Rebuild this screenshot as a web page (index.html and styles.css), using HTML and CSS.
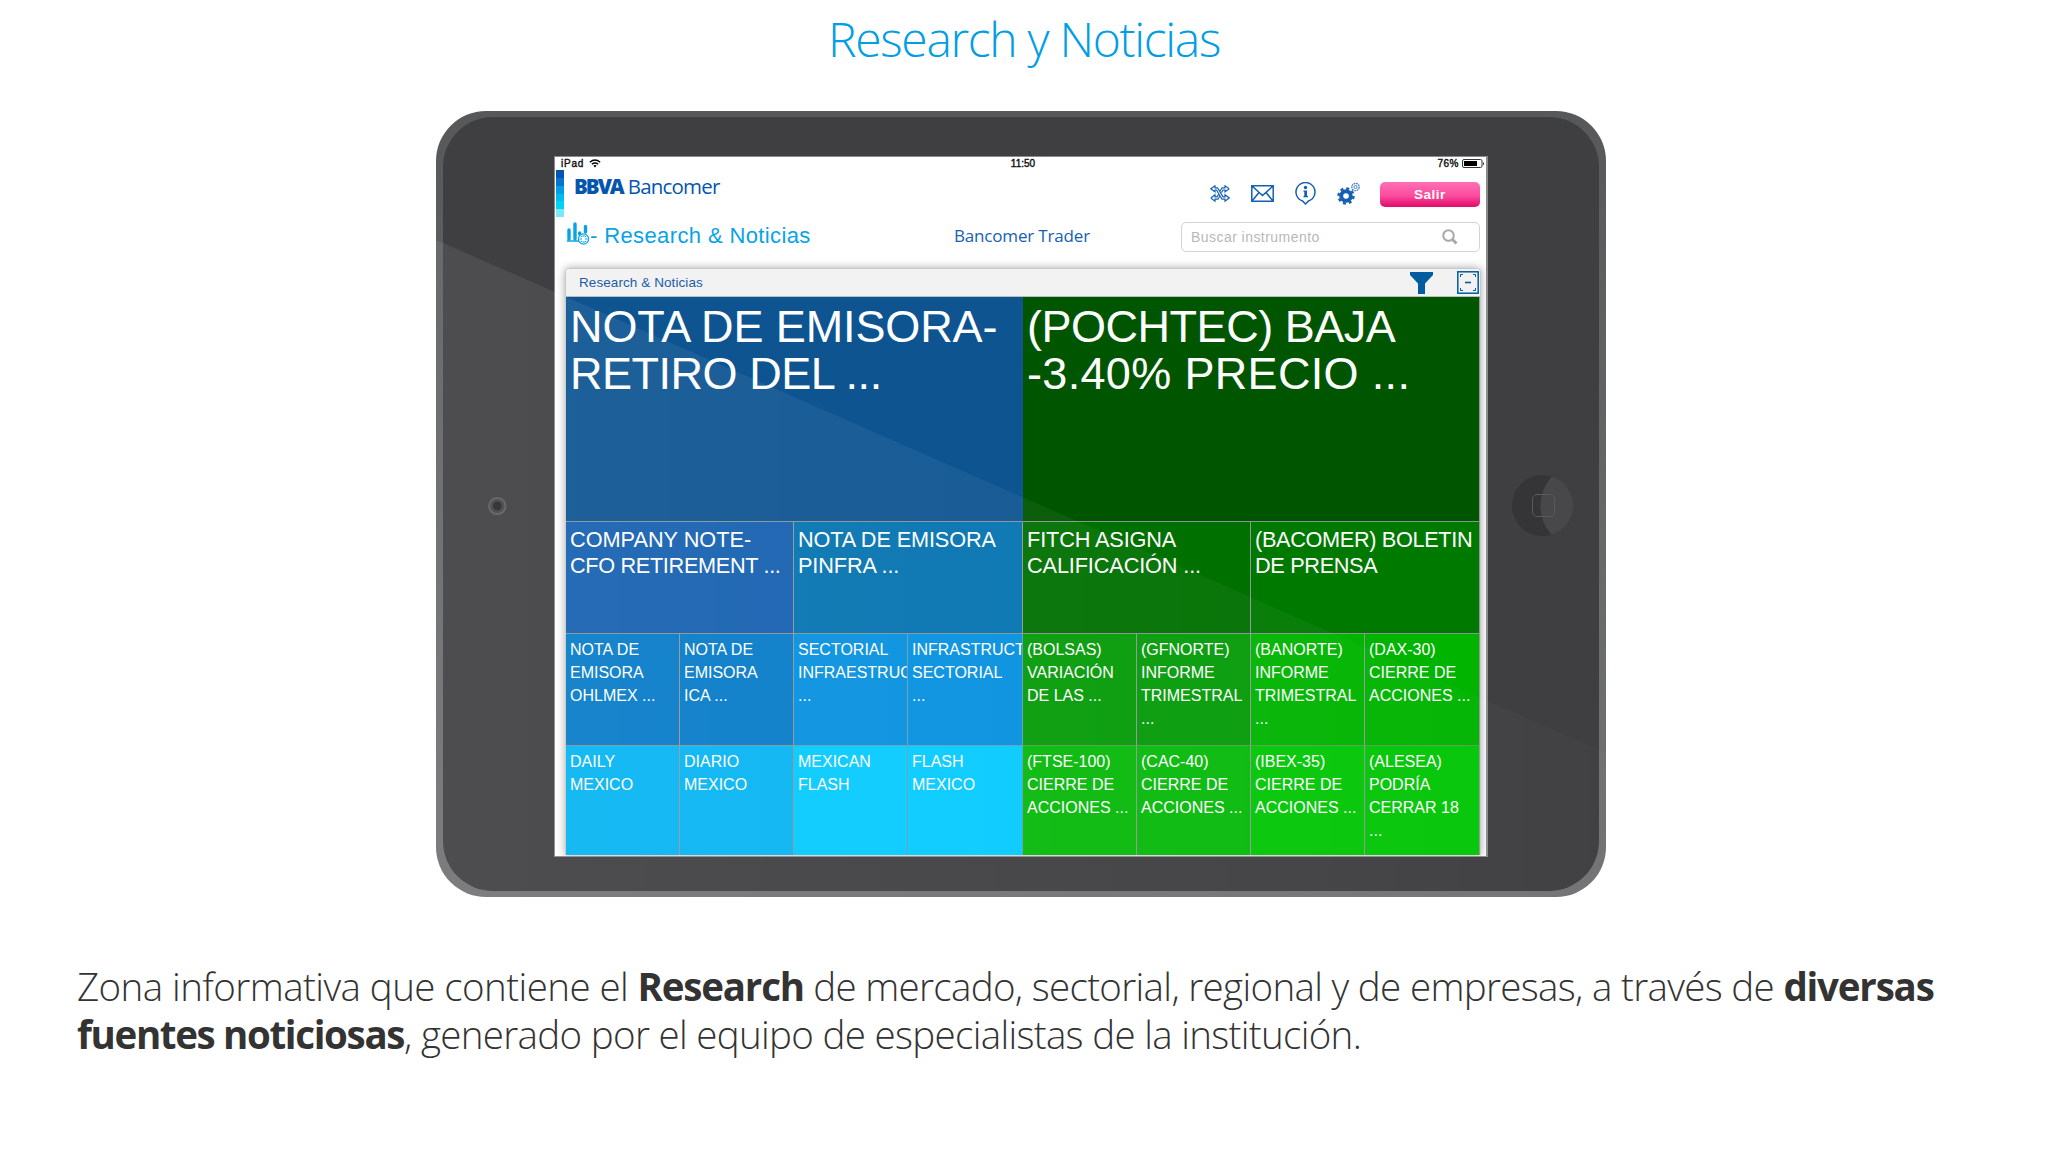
FILE: index.html
```html
<!DOCTYPE html>
<html lang="es">
<head>
<meta charset="utf-8">
<title>Research y Noticias</title>
<link rel="stylesheet" href="styles.css">
</head>
<body>
<main class="page">
  <h1 class="title">Research y Noticias</h1>

  <section class="tablet">
    <svg class="hardware" viewBox="0 0 1170 786" aria-hidden="true">
      <circle cx="61.3" cy="395" r="8.2" fill="#464648" stroke="#606062" stroke-width="1.8"/>
      <circle cx="61.3" cy="395" r="4.5" fill="#29292b"/>
      <circle cx="1106.5" cy="394.5" r="30.5" fill="#353537"/>
      <path d="M1116 365.5A30.5 30.5 0 0 1 1115.500 423.700A43 43 0 0 1 1116 365.500Z" fill="#48484a"/>
      <rect x="1096.5" y="383.5" width="22" height="22" rx="4.5" fill="none" stroke="#59595b"/>
    </svg>

    <div class="screen">
      <div class="status">
        <span class="carrier">iPad
          <svg width="12" height="9" viewBox="0 0 12 9" fill="none" stroke="#000" stroke-width="1.3"><path d="M.8 3.200Q6-1.200 11.200 3.200M2.800 5.300Q6 2.700 9.200 5.300"/><path d="M4.300 6.500Q6 5.300 7.700 6.500L6 8.500Z" fill="#000" stroke="none"/></svg>
        </span>
        <span class="clock">11:50</span>
        <span class="power">76%
          <svg width="23" height="9" viewBox="0 0 23 9"><rect x=".5" y=".5" width="19.5" height="8" rx="1.5" fill="none" stroke="#333"/><rect x="2" y="2" width="13" height="5"/><path d="M21.200 2.500q1.500 2 0 4z"/></svg>
        </span>
      </div>

      <header class="brand">
        <div class="stripes"><i></i><i></i><i></i><i></i><i></i><i></i></div>
        <div class="logo"><b>BBVA</b><span>Bancomer</span></div>
        <nav class="tools">
          <svg width="20" height="17" viewBox="0 0 20 17" fill="none" stroke="#1560b3" stroke-width="1.2"><path d="M.8 3.800L5 .8V2.800H7.500L13 11.800H15V9.800L19.200 13L15 16.200V14.200H12L6.500 5H5V6.800ZM.8 13L5 9.800V11.800H7L8.500 9.500M.8 13L5 16.200V14.200H8L10 10.800M19.200 3.800L15 .8V2.800H12L10 6M19.200 3.800L15 6.800V5H13L11.500 7.500"/></svg>
          <svg width="23" height="17" viewBox="0 0 23 17" fill="none" stroke="#1560b3" stroke-width="1.5"><path d="M.8.8H22.200V16.200H.8ZM.8.8L11.500 10.500L22.200.8M.8 16.200L8 7.500M22.200 16.200L15 7.500"/></svg>
          <svg width="21" height="23" viewBox="0 0 21 23"><path d="M7.500 19A9.500 9.500 0 1 1 13.500 19L10.500 22Z" fill="none" stroke="#1560b3" stroke-width="1.5"/><circle cx="10.5" cy="5.5" r="1.7" fill="#1560b3"/><path d="M8.500 8.500H12V14H13V15.300H8.500V14H9.300V9.800H8.500Z" fill="#1560b3"/></svg>
          <svg width="24" height="23" viewBox="0 0 24 23"><circle cx="9" cy="14" r="4.8" fill="none" stroke="#1560b3" stroke-width="4"/><circle cx="9" cy="14" r="7.5" fill="none" stroke="#1560b3" stroke-width="2.4" stroke-dasharray="3 2.890"/><circle cx="18.5" cy="5" r="3.7" fill="none" stroke="#4b85c7" stroke-width="1.3" stroke-dasharray="1.900 .6"/><circle cx="18.5" cy="5" r="1.6" fill="none" stroke="#4b85c7"/></svg>
        </nav>
        <button class="exit">Salir</button>
      </header>

      <div class="heading">
        <svg class="chart" width="22" height="23" viewBox="0 0 22 23"><path d="M0 19H12" stroke="#08a3e6" stroke-width="1.5"/><path d="M2 17V8M8 17V2M12.700 12V11M18.500 10V4.500" stroke="#08a3e6" stroke-width="3.4" stroke-linecap="round"/><circle cx="16.5" cy="17" r="5.1" fill="#fff" stroke="#08a3e6" stroke-width="1.2"/><path d="M12.500 17H15M18 17H20.500M13.800 15L15.500 14H17.500L19.200 15M13.800 19L15.500 20H17.500L19.200 19" stroke="#08a3e6" fill="none"/></svg>
        <h2 class="section">- Research &amp; Noticias</h2>
        <span class="trader">Bancomer Trader</span>
        <label class="search"><span>Buscar instrumento</span>
          <svg width="16" height="16" viewBox="0 0 16 16" fill="none" stroke="#a7a9ab"><circle cx="6.5" cy="6.5" r="5.3" stroke-width="2"/><path d="M10 10L14.500 14.500" stroke-width="3"/></svg>
        </label>
      </div>

      <section class="panel">
        <div class="panel-head">
          <span>Research &amp; Noticias</span>
          <svg width="23" height="22" viewBox="0 0 23 22"><path d="M0 0H23V3L15 11.500V22H8V11.500L0 3Z" fill="#005b9f"/></svg>
          <svg width="22" height="23" viewBox="0 0 22 23" fill="none" stroke="#005b9f"><rect x=".8" y=".8" width="20.4" height="21.4" stroke-width="1.5"/><path d="M3.500 6V3.500H6M16 3.500H18.500V6M3.500 17V19.500H6M16 19.500H18.500V17" stroke-width="1"/><path d="M8 11.500H14" stroke-width="1.6"/></svg>
        </div>
        <div class="map">
          <article class="tile big b1"><span class="snug">NOTA DE EMISORA-</span><br><span class="tight">RETIRO DEL ...</span></article>
          <article class="tile big g1"><span class="tight">(POCHTEC) BAJA</span><br><span class="loose">-3.40% PRECIO ...</span></article>
          <article class="tile mid b2">COMPANY NOTE-<br><span class="close">CFO RETIREMENT ...</span></article>
          <article class="tile mid b3"><span class="snug">NOTA DE EMISORA</span><br><span class="snug">PINFRA ...</span></article>
          <article class="tile mid g2"><span class="snug">FITCH ASIGNA<br>CALIFICACIÓN ...</span></article>
          <article class="tile mid g3"><span class="close">(BACOMER) BOLETIN<br>DE PRENSA</span></article>
          <article class="tile b4">NOTA DE<br>EMISORA<br>OHLMEX ...</article>
          <article class="tile b4">NOTA DE<br>EMISORA<br>ICA ...</article>
          <article class="tile b5">SECTORIAL<br>INFRAESTRUC<br>...</article>
          <article class="tile b5">INFRASTRUCT<br>SECTORIAL<br>...</article>
          <article class="tile g4">(BOLSAS)<br>VARIACIÓN<br>DE LAS ...</article>
          <article class="tile g4">(GFNORTE)<br>INFORME<br>TRIMESTRAL<br>...</article>
          <article class="tile g5">(BANORTE)<br>INFORME<br>TRIMESTRAL<br>...</article>
          <article class="tile g5">(DAX-30)<br>CIERRE DE<br>ACCIONES ...</article>
          <article class="tile b6">DAILY<br>MEXICO</article>
          <article class="tile b6">DIARIO<br>MEXICO</article>
          <article class="tile b7">MEXICAN<br>FLASH</article>
          <article class="tile b7">FLASH<br>MEXICO</article>
          <article class="tile g6">(FTSE-100)<br>CIERRE DE<br>ACCIONES ...</article>
          <article class="tile g6">(CAC-40)<br>CIERRE DE<br>ACCIONES ...</article>
          <article class="tile g7">(IBEX-35)<br>CIERRE DE<br>ACCIONES ...</article>
          <article class="tile g7">(ALESEA)<br>PODRÍA<br>CERRAR 18<br>...</article>
        </div>
      </section>
    </div>
    <div class="sheen"></div>
  </section>

  <p class="summary"><span class="line first">Zona informativa que contiene el <b>Research</b><span class="tail"> de mercado, sectorial, regional y de empresas, a través de <b>diversas</b></span></span> <span class="line second"><b>fuentes noticiosas</b>, generado por el equipo de especialistas de la institución.</span></p>
</main>
</body>
</html>
```
FILE: styles.css
```css
* { box-sizing: border-box; }
body { margin: 0; background: #fff; font-family: "Liberation Sans", Arial, sans-serif; }
svg { display: block; flex: none; }
.page { width: 2048px; height: 1176px; overflow: hidden; display: flex; flex-direction: column; }
.title { margin: 0; height: 111px; padding-top: 6px; text-align: center; font: 300 48px/66px "Open Sans", sans-serif; letter-spacing: -1.32px; color: #009ee5; }

.tablet { position: relative; width: 1170px; height: 786px; margin-left: 436px; padding: 45px 0 0 118px; border-radius: 50px; flex: none; }
.tablet::before { content: ""; position: absolute; inset: 0; border-radius: 50px; background: linear-gradient(#57585a, #67686a 55%, #737375); }
.tablet::after { content: ""; position: absolute; inset: 6px 7px; border-radius: 50px; background: #3f3f41; }
.hardware { position: absolute; inset: 0; z-index: 1; }
.sheen { position: absolute; inset: 0; z-index: 3; border-radius: 50px; background: linear-gradient(90deg, rgba(255,255,255,.075), rgba(255,255,255,.035) 75%, rgba(255,255,255,.01)); clip-path: polygon(0 129px, 100% 642px, 100% 100%, 0 100%); pointer-events: none; }

.screen { position: relative; z-index: 2; width: 934px; height: 701px; border: 1px solid #8b8b8d; border-right-width: 2px; background: #fff; overflow: hidden; }
.status { height: 13px; padding: 0 1px 0 6px; display: grid; grid-template-columns: 1fr auto 1fr; align-items: center; font-size: 10px; line-height: 13px; color: #111; -webkit-text-stroke: .4px #111; }
.carrier, .power { display: flex; align-items: center; gap: 5px; letter-spacing: .8px; }
.power { justify-content: flex-end; gap: 3px; letter-spacing: .5px; }

.brand { height: 47px; display: flex; align-items: flex-start; padding: 0 6px 0 1px; }
.stripes { width: 8px; height: 47px; display: grid; grid-template-rows: repeat(6, 1fr); }
.stripes i:nth-child(1) { background: #0055b3; }
.stripes i:nth-child(2) { background: #0075cf; }
.stripes i:nth-child(3) { background: #009dea; }
.stripes i:nth-child(4) { background: #00bbf0; }
.stripes i:nth-child(5) { background: #00d2f8; }
.stripes i:nth-child(6) { background: #7ae7ff; }
.logo { display: flex; gap: 5px; margin: 2px 0 0 10px; font: 20.5px/28px "Open Sans", sans-serif; color: #0555ad; letter-spacing: -.8px; }
.logo b { font-weight: 800; letter-spacing: -2px; }
.tools { display: flex; align-items: center; gap: 21px; margin: 12px 0 0 auto; }
.exit { margin: 12px 0 0 19px; width: 100px; height: 25px; border: 0; border-radius: 5px; padding: 0; background: linear-gradient(#ff70b6, #fb4c9d 55%, #e3116f 95%); color: #fff; font: bold 13.5px/25px "Liberation Sans", sans-serif; letter-spacing: .5px; }

.heading { height: 51px; display: flex; align-items: flex-start; padding: 0 6px 0 12px; }
.chart { margin-top: 5px; }
.section { margin: 6px 0 0 1px; width: 364px; font: 400 22px/26px "Liberation Sans", sans-serif; letter-spacing: .38px; color: #08a3e6; white-space: nowrap; }
.trader { font: 17px/24px "Open Sans", sans-serif; color: #1560b3; margin-top: 7px; letter-spacing: -.17px; white-space: nowrap; }
.search { display: flex; justify-content: space-between; align-items: center; margin: 5px 0 0 auto; width: 299px; height: 30px; border: 1px solid #d3d4d5; border-radius: 5px; padding: 0 21px 0 9px; font-size: 14px; letter-spacing: .45px; color: #b7b8b9; }

.panel { margin: 0 7px 0 10px; width: 916px; border: 1px solid #c8c9ca; border-bottom: 0; border-radius: 4px 4px 0 0; box-shadow: 0 0 9px rgba(0,0,0,.35); }
.panel-head { height: 28px; background: #f2f2f2; border-bottom: 1px solid #bcbdbf; display: flex; align-items: center; gap: 24px; padding-right: 1px; font-size: 13.5px; letter-spacing: .08px; color: #1d5ca6; border-radius: 4px 4px 0 0; }
.panel-head span { margin: 0 auto 0 13px; }
.map { display: grid; grid-template-columns: 114px 114px 114px 115px 114px 114px 114px 115px; grid-template-rows: 225px 112px 112px 109px; height: 558px; }
.tile { overflow: hidden; border-right: 1px solid #929799; border-bottom: 1px solid #889499; padding: 4px 0 0 4px; color: #fff; font-size: 16px; line-height: 23px; white-space: nowrap; }
.mid { grid-column: span 2; font-size: 21.7px; line-height: 25.5px; padding-top: 5px; }
.big { grid-column: span 4; font-size: 45px; line-height: 47px; padding-top: 6px; }
.snug { letter-spacing: -.12px; }
.close { letter-spacing: -.33px; }
.tight { letter-spacing: -.48px; }
.loose { letter-spacing: .33px; }
.b1 { background: #0d5491; border-right-color: #0d5491; } .b2 { background: #1560b0; } .b3 { background: #0473b0; }
.b4 { background: #067bc8; } .b5 { background: #0690df; } .b6 { background: #06b4f2; } .b7 { background: #05caff; }
.g1 { background: #005500; } .g2 { background: #007000; } .g3 { background: #007900; }
.g4 { background: #059b08; } .g5 { background: #00b400; } .g6 { background: #07b90a; } .g7 { background: #03c606; }
.b5, .b7 { border-color: #64a0b8; }
.g4, .g5 { border-bottom-color: #55a05a; }
.b6, .b7, .g6, .g7 { border-bottom: 0; }

.summary { margin: 65px 0 0 77px; font: 300 38.5px/48px "Open Sans", sans-serif; color: #333; white-space: nowrap; }
.summary b { font-weight: 700; letter-spacing: -1.2px; }
.line { display: block; }
.first { letter-spacing: -.57px; }
.tail { letter-spacing: -.67px; }
.second { letter-spacing: -.68px; }
.second b { letter-spacing: -1.35px; }
```
